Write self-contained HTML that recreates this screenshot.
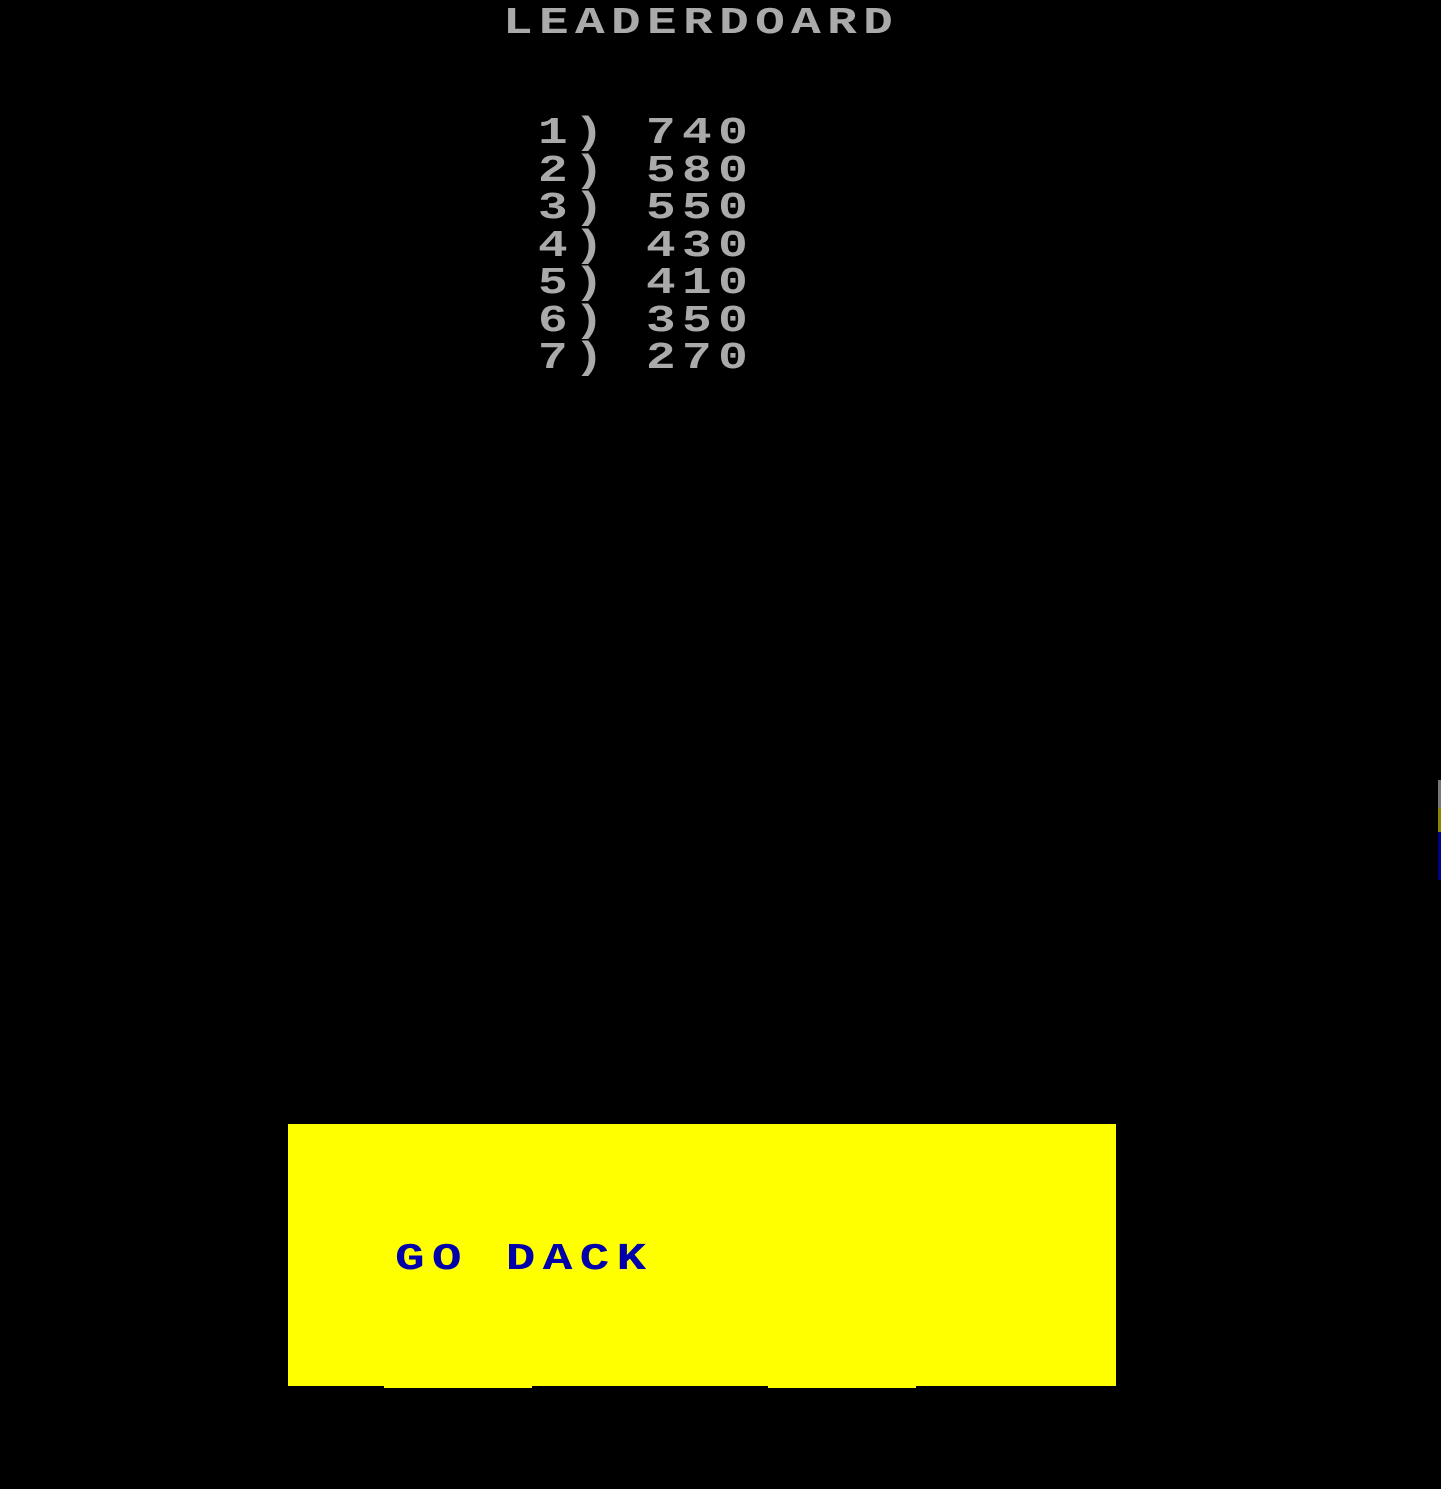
<!DOCTYPE html>
<html><head><meta charset="utf-8"><style>
html,body{margin:0;padding:0;background:#000;}
body{width:1441px;height:1489px;position:relative;overflow:hidden;font-family:"Liberation Mono",monospace;font-weight:bold;}
.t{position:absolute;white-space:pre;font-size:38px;line-height:38px;letter-spacing:4.9px;color:#aaaaaa;transform:scaleX(1.3);transform-origin:0 0;}
.box{position:absolute;left:288px;top:1124px;width:828px;height:262px;background:#ffff00;}
.gb{color:#0000aa;}
.edge{position:absolute;left:1438px;width:3px;}
</style></head><body>
<div class="t" style="left:503px;top:5px;">LEADERDOARD</div>
<div class="t" style="left:538px;top:115px;">1) 740</div>
<div class="t" style="left:538px;top:152.5px;">2) 580</div>
<div class="t" style="left:538px;top:190px;">3) 550</div>
<div class="t" style="left:538px;top:227.5px;">4) 430</div>
<div class="t" style="left:538px;top:265px;">5) 410</div>
<div class="t" style="left:538px;top:302.5px;">6) 350</div>
<div class="t" style="left:538px;top:340px;">7) 270</div>
<div class="box"></div>
<div style="position:absolute;left:384px;top:1386px;width:148px;height:2px;background:#ffff00"></div>
<div style="position:absolute;left:768px;top:1386px;width:148px;height:2px;background:#ffff00"></div>
<div class="t gb" style="left:395px;top:1241px;letter-spacing:5.6px;">GO DACK</div>
<div class="edge" style="top:780px;height:28px;background:#777"></div>
<div class="edge" style="top:808px;height:24px;background:#888800"></div>
<div class="edge" style="top:832px;height:48px;background:#000088"></div>
</body></html>
